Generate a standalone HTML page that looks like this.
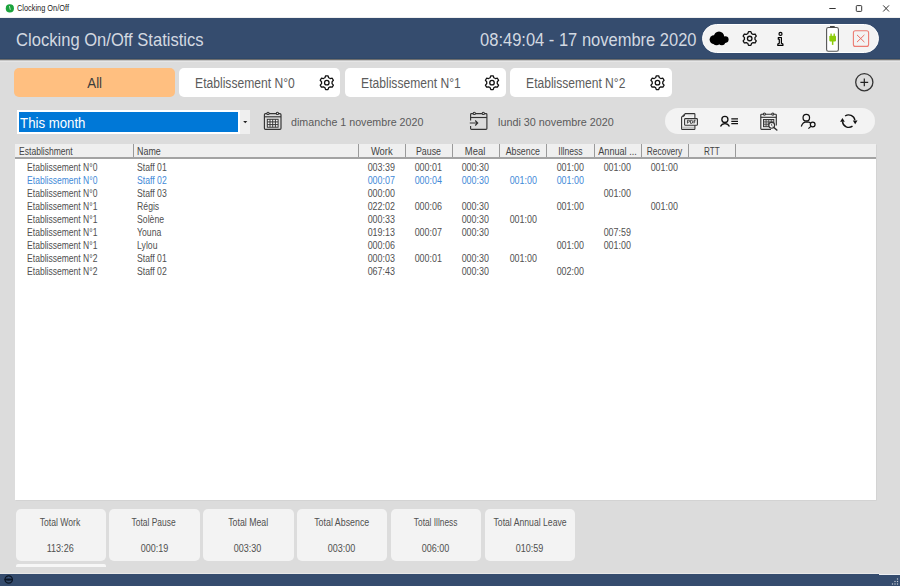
<!DOCTYPE html>
<html><head><meta charset="utf-8"><style>
html,body{margin:0;padding:0;width:900px;height:586px;overflow:hidden;background:#dcdcdc;}
body{position:relative;font-family:"Liberation Sans", sans-serif;}
.b{position:absolute;box-sizing:border-box;}
.t{position:absolute;white-space:nowrap;line-height:normal;font-family:"Liberation Sans", sans-serif;}
svg{position:absolute;left:0;top:0;}
</style></head><body>
<div class="b" style="left:0;top:0;width:900px;height:17px;background:#fff"></div>
<div class="b" style="left:0;top:17px;width:900px;height:1px;background:#f0f0f0"></div>
<div class="b" style="left:0;top:18px;width:900px;height:41px;background:#354c6e"></div>
<div class="b" style="left:0;top:58px;width:900px;height:1px;background:#2f4868"></div>
<div class="b" style="left:0;top:59px;width:900px;height:1px;background:#6e6e6e"></div>
<div class="b" style="left:0;top:60px;width:900px;height:1px;background:#c4c4c4"></div>
<div class="b" style="left:0;top:61px;width:900px;height:1px;background:#e6e6e6"></div>
<div class="b" style="left:702px;top:23.6px;width:176.5px;height:29.6px;border-radius:15px;background:#f3f3f3;border:1.6px solid #fff"></div>
<div class="b" style="left:14px;top:68px;width:161.3px;height:28.8px;border-radius:5px;background:#ffbf80"></div>
<div class="b" style="left:179px;top:68px;width:161.3px;height:28.8px;border-radius:5px;background:#fff"></div>
<div class="b" style="left:345px;top:68px;width:161.3px;height:28.8px;border-radius:5px;background:#fff"></div>
<div class="b" style="left:510.3px;top:68px;width:161.3px;height:28.8px;border-radius:5px;background:#fff"></div>
<div class="b" style="left:17px;top:110px;width:233px;height:24px;background:#fff"></div>
<div class="b" style="left:19px;top:112px;width:219px;height:20px;background:#0078d7"></div>
<div class="b" style="left:240px;top:110.3px;width:9.7px;height:23.5px;background:#efefef"></div>
<div class="b" style="left:664.7px;top:108px;width:210px;height:26px;border-radius:13px;background:#f3f3f3"></div>
<div class="b" style="left:15.3px;top:144px;width:860.5px;height:355.5px;background:#fff;box-shadow:0.8px 0.8px 0 #d2d2d2"></div>
<div class="b" style="left:15.3px;top:144px;width:860.5px;height:13px;background:#efefef"></div>
<div class="b" style="left:15.3px;top:157px;width:860.5px;height:1.8px;background:#a3a3a3"></div>
<div class="b" style="left:132.5px;top:144px;width:1.1px;height:13px;background:#9a9a9a"></div>
<div class="b" style="left:357.5px;top:144px;width:1.1px;height:13px;background:#9a9a9a"></div>
<div class="b" style="left:404.5px;top:144px;width:1.1px;height:13px;background:#9a9a9a"></div>
<div class="b" style="left:451.5px;top:144px;width:1.1px;height:13px;background:#9a9a9a"></div>
<div class="b" style="left:498.5px;top:144px;width:1.1px;height:13px;background:#9a9a9a"></div>
<div class="b" style="left:546.2px;top:144px;width:1.1px;height:13px;background:#9a9a9a"></div>
<div class="b" style="left:593.5px;top:144px;width:1.1px;height:13px;background:#9a9a9a"></div>
<div class="b" style="left:640.5px;top:144px;width:1.1px;height:13px;background:#9a9a9a"></div>
<div class="b" style="left:687.9px;top:144px;width:1.1px;height:13px;background:#9a9a9a"></div>
<div class="b" style="left:735.1px;top:144px;width:1.1px;height:13px;background:#9a9a9a"></div>

<div class="b" style="left:15.50px;top:509px;width:90.3px;height:52px;border-radius:5px;background:#f3f3f3"></div>
<div class="b" style="left:109.40px;top:509px;width:90.3px;height:52px;border-radius:5px;background:#f3f3f3"></div>
<div class="b" style="left:203.30px;top:509px;width:90.3px;height:52px;border-radius:5px;background:#f3f3f3"></div>
<div class="b" style="left:297.20px;top:509px;width:90.3px;height:52px;border-radius:5px;background:#f3f3f3"></div>
<div class="b" style="left:391.10px;top:509px;width:90.3px;height:52px;border-radius:5px;background:#f3f3f3"></div>
<div class="b" style="left:485.00px;top:509px;width:90.3px;height:52px;border-radius:5px;background:#f3f3f3"></div>

<div class="b" style="left:15.5px;top:564px;width:90.3px;height:3px;border-radius:2px 2px 0 0;background:#f7f7f7"></div>
<div class="b" style="left:0;top:574px;width:900px;height:12px;background:#354c6e"></div>
<div class="b" style="left:0;top:573px;width:879px;height:1px;background:#e8e8e8"></div>
<div class="b" style="left:879px;top:574px;width:21px;height:1px;background:#eef0f3"></div>
<svg width="900" height="586" viewBox="0 0 900 586">
<circle cx="9.85" cy="8.4" r="4.1" fill="#1ba33c"/><path d="M9.4,6 L10.3,9.8" stroke="#cfe9d3" stroke-width="0.9"/>
<path d="M829.3,8.5 H835.7" stroke="#333" stroke-width="1"/>
<rect x="856.3" y="5.6" width="5.4" height="5.8" rx="0.8" fill="none" stroke="#333" stroke-width="1"/>
<path d="M883.2,5.4 L889,11.5 M889,5.4 L883.2,11.5" stroke="#333" stroke-width="1"/>
<g fill="#000"><circle cx="719" cy="36.7" r="5.2"/><circle cx="713.9" cy="39.6" r="4.3"/><circle cx="716.5" cy="41.6" r="3.7"/><circle cx="721.8" cy="41.6" r="3.6"/><circle cx="725.3" cy="39.6" r="3.3"/></g>
<path d="M747.83,33.54 L748.52,31.60 L750.88,31.60 L751.57,33.54 A5.3,5.3 0 0 1 753.06,34.40 L755.08,34.02 L756.27,36.08 L754.93,37.64 A5.3,5.3 0 0 1 754.93,39.36 L756.27,40.92 L755.08,42.98 L753.06,42.60 A5.3,5.3 0 0 1 751.57,43.46 L750.88,45.40 L748.52,45.40 L747.83,43.46 A5.3,5.3 0 0 1 746.34,42.60 L744.32,42.98 L743.13,40.92 L744.47,39.36 A5.3,5.3 0 0 1 744.47,37.64 L743.13,36.08 L744.32,34.02 L746.34,34.40 A5.3,5.3 0 0 1 747.83,33.54 Z" fill="none" stroke="#111" stroke-width="1.3" stroke-linejoin="round"/><circle cx="749.7" cy="38.5" r="2.25" fill="none" stroke="#111" stroke-width="1.3"/>
<g fill="none" stroke="#000" stroke-width="1.2"><circle cx="780.5" cy="33.9" r="1.5"/><path d="M778.3,37.5 H781.4 V43.2 L782.9,44.1 V45.4 H777.8 V44.1 L779.3,43.2 V39.2 H778.3 Z" stroke-linejoin="round"/></g>
<rect x="826.6" y="27.5" width="11.8" height="23.7" rx="1.8" fill="#fff" stroke="#555" stroke-width="1.1"/><rect x="830" y="26" width="4.7" height="1.6" fill="#444"/>
<g fill="#8ccc0a"><rect x="829.3" y="35.8" width="6.7" height="5.6" rx="0.8"/><rect x="830.4" y="33.6" width="1.4" height="2.5"/><rect x="833.5" y="33.6" width="1.4" height="2.5"/><rect x="831.9" y="41" width="1.5" height="3.9"/></g>
<rect x="853.4" y="30.8" width="15.2" height="15.6" rx="2" fill="none" stroke="#ec7b72" stroke-width="1.1"/><path d="M857,34.9 L864.4,42.1 M864.4,34.9 L857,42.1" stroke="#ea6c62" stroke-width="1"/>
<path d="M324.93,77.74 L325.62,75.80 L327.98,75.80 L328.67,77.74 A5.3,5.3 0 0 1 330.16,78.60 L332.18,78.22 L333.37,80.28 L332.03,81.84 A5.3,5.3 0 0 1 332.03,83.56 L333.37,85.12 L332.18,87.18 L330.16,86.80 A5.3,5.3 0 0 1 328.67,87.66 L327.98,89.60 L325.62,89.60 L324.93,87.66 A5.3,5.3 0 0 1 323.44,86.80 L321.42,87.18 L320.23,85.12 L321.57,83.56 A5.3,5.3 0 0 1 321.57,81.84 L320.23,80.28 L321.42,78.22 L323.44,78.60 A5.3,5.3 0 0 1 324.93,77.74 Z" fill="none" stroke="#111" stroke-width="1.3" stroke-linejoin="round"/><circle cx="326.8" cy="82.7" r="2.25" fill="none" stroke="#111" stroke-width="1.3"/>
<path d="M490.13,77.74 L490.82,75.80 L493.18,75.80 L493.87,77.74 A5.3,5.3 0 0 1 495.36,78.60 L497.38,78.22 L498.57,80.28 L497.23,81.84 A5.3,5.3 0 0 1 497.23,83.56 L498.57,85.12 L497.38,87.18 L495.36,86.80 A5.3,5.3 0 0 1 493.87,87.66 L493.18,89.60 L490.82,89.60 L490.13,87.66 A5.3,5.3 0 0 1 488.64,86.80 L486.62,87.18 L485.43,85.12 L486.77,83.56 A5.3,5.3 0 0 1 486.77,81.84 L485.43,80.28 L486.62,78.22 L488.64,78.60 A5.3,5.3 0 0 1 490.13,77.74 Z" fill="none" stroke="#111" stroke-width="1.3" stroke-linejoin="round"/><circle cx="492.0" cy="82.7" r="2.25" fill="none" stroke="#111" stroke-width="1.3"/>
<path d="M655.63,77.74 L656.32,75.80 L658.68,75.80 L659.37,77.74 A5.3,5.3 0 0 1 660.86,78.60 L662.88,78.22 L664.07,80.28 L662.73,81.84 A5.3,5.3 0 0 1 662.73,83.56 L664.07,85.12 L662.88,87.18 L660.86,86.80 A5.3,5.3 0 0 1 659.37,87.66 L658.68,89.60 L656.32,89.60 L655.63,87.66 A5.3,5.3 0 0 1 654.14,86.80 L652.12,87.18 L650.93,85.12 L652.27,83.56 A5.3,5.3 0 0 1 652.27,81.84 L650.93,80.28 L652.12,78.22 L654.14,78.60 A5.3,5.3 0 0 1 655.63,77.74 Z" fill="none" stroke="#111" stroke-width="1.3" stroke-linejoin="round"/><circle cx="657.5" cy="82.7" r="2.25" fill="none" stroke="#111" stroke-width="1.3"/>
<circle cx="864.3" cy="82.2" r="8.6" fill="none" stroke="#333" stroke-width="1.3"/><path d="M860.4,82.4 H868.2 M864.3,78.5 V86.3" stroke="#222" stroke-width="1.2"/>
<path d="M243.2,121 H247.3 L245.25,123.2 Z" fill="#222"/>
<g fill="none" stroke="#333" stroke-width="1.15"><rect x="264.4" y="113.6" width="16.6" height="15.8" rx="1.1"/><path d="M264.4,116.8 H281"/></g><g fill="#ddd" stroke="#333" stroke-width="1.05"><circle cx="268" cy="113.4" r="1.15"/><circle cx="277.4" cy="113.4" r="1.15"/></g><g fill="none" stroke="#333" stroke-width="0.95"><rect x="267.3" y="119.3" width="10.8" height="7.9" fill="#f4f4f4"/><path d="M270,119.3 V127.2 M272.7,119.3 V127.2 M275.4,119.3 V127.2 M267.3,121.9 H278.1 M267.3,124.6 H278.1"/></g>
<g fill="none" stroke="#333" stroke-width="1.15"><path d="M470.6,120.4 V114.5 Q470.6,113.6 471.5,113.6 H486 Q486.9,113.6 486.9,114.5 V128.5 Q486.9,129.4 486,129.4 H471.5 Q470.6,129.4 470.6,128.5 V125.9"/><path d="M470.6,117.5 H486.9"/><path d="M469.8,123 H477.4 M475.2,120.5 L477.7,123 L475.2,125.5"/></g><g fill="#ddd" stroke="#333" stroke-width="1.05"><circle cx="474.3" cy="113.4" r="1.15"/><circle cx="483.3" cy="113.4" r="1.15"/></g>
<rect x="682.3" y="126.6" width="12" height="2.3" fill="#c4c4c4"/><g fill="none" stroke="#333" stroke-width="1.1"><path d="M685.2,113.6 H694.2 Q694.9,113.6 694.9,114.3 V128.8 Q694.9,129.5 694.2,129.5 H682.3 Q681.6,129.5 681.6,128.8 V117.2 Z" stroke-linejoin="round"/><path d="M682.6,116.6 Q684.6,116.8 684.9,114.6" stroke-width="0.9"/></g><path d="M688.2,115.9 H692.8" stroke="#d8d8d8" stroke-width="0.9"/><rect x="684.6" y="118.6" width="12.8" height="6.6" rx="0.8" fill="#f3f3f3" stroke="#333" stroke-width="1.1"/><g fill="none" stroke="#2a2a2a" stroke-width="0.85"><path d="M687.4,123.5 V120.3 H688.8 Q689.7,120.3 689.7,121.2 Q689.7,122.1 688.8,122.1 H687.4"/><path d="M690.6,123.4 V120.3 H691.4 Q692.8,120.3 692.8,121.85 Q692.8,123.4 691.4,123.4 Z"/><path d="M694,123.5 V120.3 H695.6 M694,121.9 H695.3"/></g>
<g fill="none" stroke="#111" stroke-width="1.3"><circle cx="724.9" cy="119.4" r="3.05"/><path d="M720.5,126.6 A4.8,4.8 0 0 1 729.4,126.6"/><path d="M731.3,118.9 H738 M731.3,121.3 H738 M731.3,123.6 H738" stroke-width="1.2"/></g>
<g fill="none" stroke="#333" stroke-width="1.15"><path d="M771,129.3 H761.5 Q760.8,129.3 760.8,128.6 V114.9 Q760.8,114.2 761.5,114.2 H775.6 Q776.3,114.2 776.3,114.9 V125.6"/><path d="M760.8,117.3 H776.3"/></g><g fill="#ddd" stroke="#333" stroke-width="1.05"><circle cx="764.4" cy="114.1" r="1.1"/><circle cx="772.8" cy="114.1" r="1.1"/></g><rect x="763.5" y="119.5" width="10.3" height="7.2" fill="#c9c9c9" stroke="#333" stroke-width="0.95"/><path d="M766.1,119.5 V126.7 M768.7,119.5 V126.7 M771.3,119.5 V126.7 M763.5,121.9 H773.8 M763.5,124.3 H773.8" stroke="#444" stroke-width="0.8"/><circle cx="771.7" cy="125.3" r="2.9" fill="#f3f3f3" stroke="#333" stroke-width="1.15"/><path d="M771.6,123.8 V125.5 L772.5,126.1" stroke="#444" stroke-width="0.8" fill="none"/><path d="M773.9,127.5 L776.8,130" stroke="#333" stroke-width="1.6" stroke-linecap="round"/>
<g fill="none" stroke="#111" stroke-width="1.25"><circle cx="806.3" cy="117.7" r="3.25"/><path d="M801.3,126.5 Q802.6,122 806.8,121.9 Q809,121.9 810.6,123"/><circle cx="812.7" cy="124.5" r="2.35"/><path d="M810.9,126.4 L808.4,128.6"/></g>
<g fill="none" stroke="#111" stroke-width="1.35"><path d="M845.1,116 A6.3,6.3 0 0 1 854.9,120.2"/><path d="M852.5,126.1 A6.3,6.3 0 0 1 842.5,121.6"/></g><path d="M852.8,120.6 L857.5,120.6 L855.15,124.3 Z" fill="#111"/><path d="M840.1,121.7 L844.8,121.7 L842.45,118 Z" fill="#111"/>
<g fill="none" stroke="#0b1626" stroke-width="1.3"><circle cx="8.7" cy="579.5" r="3.7"/></g><ellipse cx="8.7" cy="579.6" rx="4.3" ry="1.1" fill="#0b1626"/><circle cx="8.7" cy="577.4" r="0.7" fill="#3d5a80"/>
<rect x="896.9" y="578.4" width="1.2" height="1.2" fill="#c9ced6"/>
<rect x="894.4" y="580.9" width="1.2" height="1.2" fill="#c9ced6"/>
<rect x="896.9" y="580.9" width="1.2" height="1.2" fill="#c9ced6"/>
<rect x="891.9" y="583.4" width="1.2" height="1.2" fill="#c9ced6"/>
<rect x="894.4" y="583.4" width="1.2" height="1.2" fill="#c9ced6"/>
<rect x="896.9" y="583.4" width="1.2" height="1.2" fill="#c9ced6"/>
</svg>
<span class="t" style="left:17.31px;top:4.06px;font-size:8.2px;transform:scaleX(0.9002);transform-origin:0.49px 0;color:#222">Clocking On/Off</span>
<span class="t" style="left:16.14px;top:30.22px;font-size:17.7px;transform:scaleX(0.9365);transform-origin:1.06px 0;color:#d3d9e1">Clocking On/Off Statistics</span>
<span class="t" style="left:479.95px;top:30.30px;font-size:17.5px;transform:scaleX(0.9428);transform-origin:1.05px 0;color:#d3d9e1">08:49:04 - 17 novembre 2020</span>
<span class="t" style="left:86.83px;top:76.00px;font-size:13.8px;transform:scaleX(0.9644);transform-origin:50% 0;color:#3c3c3c">All</span>
<span class="t" style="left:194.97px;top:76.00px;font-size:13.8px;transform:scaleX(0.8768);transform-origin:0.83px 0;color:#5c5c5c">Etablissement N°0</span>
<span class="t" style="left:360.97px;top:76.00px;font-size:13.8px;transform:scaleX(0.8768);transform-origin:0.83px 0;color:#5c5c5c">Etablissement N°1</span>
<span class="t" style="left:525.67px;top:76.00px;font-size:13.8px;transform:scaleX(0.8732);transform-origin:0.83px 0;color:#5c5c5c">Etablissement N°2</span>
<span class="t" style="left:19.92px;top:114.97px;font-size:14.6px;transform:scaleX(0.9058);transform-origin:0.88px 0;color:#ffffff">This month</span>
<span class="t" style="left:291.49px;top:115.44px;font-size:11.8px;transform:scaleX(0.9045);transform-origin:0.71px 0;color:#5a5a5a">dimanche 1 novembre 2020</span>
<span class="t" style="left:497.59px;top:115.44px;font-size:11.8px;transform:scaleX(0.9147);transform-origin:0.71px 0;color:#5a5a5a">lundi 30 novembre 2020</span>
<span class="t" style="left:18.79px;top:146.02px;font-size:10.2px;transform:scaleX(0.8379);transform-origin:0.61px 0;color:#444">Establishment</span>
<span class="t" style="left:137.19px;top:146.02px;font-size:10.2px;transform:scaleX(0.8700);transform-origin:0.61px 0;color:#444">Name</span>
<span class="t" style="left:369.70px;top:146.02px;font-size:10.2px;transform:scaleX(0.9254);transform-origin:50% 0;color:#444">Work</span>
<span class="t" style="left:414.05px;top:146.02px;font-size:10.2px;transform:scaleX(0.8675);transform-origin:50% 0;color:#444">Pause</span>
<span class="t" style="left:464.45px;top:146.02px;font-size:10.2px;transform:scaleX(0.9248);transform-origin:50% 0;color:#444">Meal</span>
<span class="t" style="left:503.17px;top:146.02px;font-size:10.2px;transform:scaleX(0.8665);transform-origin:50% 0;color:#444">Absence</span>
<span class="t" style="left:556.05px;top:146.02px;font-size:10.2px;transform:scaleX(0.8422);transform-origin:50% 0;color:#444">Illness</span>
<span class="t" style="left:595.98px;top:146.02px;font-size:10.2px;transform:scaleX(0.8942);transform-origin:50% 0;color:#444">Annual ...</span>
<span class="t" style="left:642.98px;top:146.02px;font-size:10.2px;transform:scaleX(0.8228);transform-origin:50% 0;color:#444">Recovery</span>
<span class="t" style="left:701.99px;top:146.02px;font-size:10.2px;transform:scaleX(0.7989);transform-origin:50% 0;color:#444">RTT</span>
<span class="t" style="left:27.40px;top:162.00px;font-size:10px;transform:scaleX(0.8537);transform-origin:0.60px 0;color:#505050">Etablissement N°0</span>
<span class="t" style="left:137.20px;top:162.00px;font-size:10px;transform:scaleX(0.8650);transform-origin:0.60px 0;color:#505050">Staff 01</span>
<span class="t" style="left:366.20px;top:162.00px;font-size:10px;transform:scaleX(0.8913);transform-origin:50% 0;color:#505050">003:39</span>
<span class="t" style="left:413.20px;top:162.00px;font-size:10px;transform:scaleX(0.8913);transform-origin:50% 0;color:#505050">000:01</span>
<span class="t" style="left:460.20px;top:162.00px;font-size:10px;transform:scaleX(0.8913);transform-origin:50% 0;color:#505050">000:30</span>
<span class="t" style="left:555.20px;top:162.00px;font-size:10px;transform:scaleX(0.8913);transform-origin:50% 0;color:#505050">001:00</span>
<span class="t" style="left:602.20px;top:162.00px;font-size:10px;transform:scaleX(0.8913);transform-origin:50% 0;color:#505050">001:00</span>
<span class="t" style="left:649.20px;top:162.00px;font-size:10px;transform:scaleX(0.8913);transform-origin:50% 0;color:#505050">001:00</span>
<span class="t" style="left:27.40px;top:175.00px;font-size:10px;transform:scaleX(0.8537);transform-origin:0.60px 0;color:#3f8ad8">Etablissement N°0</span>
<span class="t" style="left:137.20px;top:175.00px;font-size:10px;transform:scaleX(0.8650);transform-origin:0.60px 0;color:#3f8ad8">Staff 02</span>
<span class="t" style="left:366.20px;top:175.00px;font-size:10px;transform:scaleX(0.8913);transform-origin:50% 0;color:#3f8ad8">000:07</span>
<span class="t" style="left:413.20px;top:175.00px;font-size:10px;transform:scaleX(0.8913);transform-origin:50% 0;color:#3f8ad8">000:04</span>
<span class="t" style="left:460.20px;top:175.00px;font-size:10px;transform:scaleX(0.8913);transform-origin:50% 0;color:#3f8ad8">000:30</span>
<span class="t" style="left:507.70px;top:175.00px;font-size:10px;transform:scaleX(0.8913);transform-origin:50% 0;color:#3f8ad8">001:00</span>
<span class="t" style="left:555.20px;top:175.00px;font-size:10px;transform:scaleX(0.8913);transform-origin:50% 0;color:#3f8ad8">001:00</span>
<span class="t" style="left:27.40px;top:188.00px;font-size:10px;transform:scaleX(0.8537);transform-origin:0.60px 0;color:#505050">Etablissement N°0</span>
<span class="t" style="left:137.20px;top:188.00px;font-size:10px;transform:scaleX(0.8650);transform-origin:0.60px 0;color:#505050">Staff 03</span>
<span class="t" style="left:366.20px;top:188.00px;font-size:10px;transform:scaleX(0.8913);transform-origin:50% 0;color:#505050">000:00</span>
<span class="t" style="left:602.20px;top:188.00px;font-size:10px;transform:scaleX(0.8913);transform-origin:50% 0;color:#505050">001:00</span>
<span class="t" style="left:27.40px;top:201.00px;font-size:10px;transform:scaleX(0.8537);transform-origin:0.60px 0;color:#505050">Etablissement N°1</span>
<span class="t" style="left:137.20px;top:201.00px;font-size:10px;transform:scaleX(0.8650);transform-origin:0.60px 0;color:#505050">Régis</span>
<span class="t" style="left:366.20px;top:201.00px;font-size:10px;transform:scaleX(0.8913);transform-origin:50% 0;color:#505050">022:02</span>
<span class="t" style="left:413.20px;top:201.00px;font-size:10px;transform:scaleX(0.8913);transform-origin:50% 0;color:#505050">000:06</span>
<span class="t" style="left:460.20px;top:201.00px;font-size:10px;transform:scaleX(0.8913);transform-origin:50% 0;color:#505050">000:30</span>
<span class="t" style="left:555.20px;top:201.00px;font-size:10px;transform:scaleX(0.8913);transform-origin:50% 0;color:#505050">001:00</span>
<span class="t" style="left:649.20px;top:201.00px;font-size:10px;transform:scaleX(0.8913);transform-origin:50% 0;color:#505050">001:00</span>
<span class="t" style="left:27.40px;top:214.00px;font-size:10px;transform:scaleX(0.8537);transform-origin:0.60px 0;color:#505050">Etablissement N°1</span>
<span class="t" style="left:137.20px;top:214.00px;font-size:10px;transform:scaleX(0.8650);transform-origin:0.60px 0;color:#505050">Solène</span>
<span class="t" style="left:366.20px;top:214.00px;font-size:10px;transform:scaleX(0.8913);transform-origin:50% 0;color:#505050">000:33</span>
<span class="t" style="left:460.20px;top:214.00px;font-size:10px;transform:scaleX(0.8913);transform-origin:50% 0;color:#505050">000:30</span>
<span class="t" style="left:507.70px;top:214.00px;font-size:10px;transform:scaleX(0.8913);transform-origin:50% 0;color:#505050">001:00</span>
<span class="t" style="left:27.40px;top:227.00px;font-size:10px;transform:scaleX(0.8537);transform-origin:0.60px 0;color:#505050">Etablissement N°1</span>
<span class="t" style="left:137.20px;top:227.00px;font-size:10px;transform:scaleX(0.8650);transform-origin:0.60px 0;color:#505050">Youna</span>
<span class="t" style="left:366.20px;top:227.00px;font-size:10px;transform:scaleX(0.8913);transform-origin:50% 0;color:#505050">019:13</span>
<span class="t" style="left:413.20px;top:227.00px;font-size:10px;transform:scaleX(0.8913);transform-origin:50% 0;color:#505050">000:07</span>
<span class="t" style="left:460.20px;top:227.00px;font-size:10px;transform:scaleX(0.8913);transform-origin:50% 0;color:#505050">000:30</span>
<span class="t" style="left:602.20px;top:227.00px;font-size:10px;transform:scaleX(0.8913);transform-origin:50% 0;color:#505050">007:59</span>
<span class="t" style="left:27.40px;top:240.00px;font-size:10px;transform:scaleX(0.8537);transform-origin:0.60px 0;color:#505050">Etablissement N°1</span>
<span class="t" style="left:137.20px;top:240.00px;font-size:10px;transform:scaleX(0.8650);transform-origin:0.60px 0;color:#505050">Lylou</span>
<span class="t" style="left:366.20px;top:240.00px;font-size:10px;transform:scaleX(0.8913);transform-origin:50% 0;color:#505050">000:06</span>
<span class="t" style="left:555.20px;top:240.00px;font-size:10px;transform:scaleX(0.8913);transform-origin:50% 0;color:#505050">001:00</span>
<span class="t" style="left:602.20px;top:240.00px;font-size:10px;transform:scaleX(0.8913);transform-origin:50% 0;color:#505050">001:00</span>
<span class="t" style="left:27.40px;top:253.00px;font-size:10px;transform:scaleX(0.8537);transform-origin:0.60px 0;color:#505050">Etablissement N°2</span>
<span class="t" style="left:137.20px;top:253.00px;font-size:10px;transform:scaleX(0.8650);transform-origin:0.60px 0;color:#505050">Staff 01</span>
<span class="t" style="left:366.20px;top:253.00px;font-size:10px;transform:scaleX(0.8913);transform-origin:50% 0;color:#505050">000:03</span>
<span class="t" style="left:413.20px;top:253.00px;font-size:10px;transform:scaleX(0.8913);transform-origin:50% 0;color:#505050">000:01</span>
<span class="t" style="left:460.20px;top:253.00px;font-size:10px;transform:scaleX(0.8913);transform-origin:50% 0;color:#505050">000:30</span>
<span class="t" style="left:507.70px;top:253.00px;font-size:10px;transform:scaleX(0.8913);transform-origin:50% 0;color:#505050">001:00</span>
<span class="t" style="left:27.40px;top:266.00px;font-size:10px;transform:scaleX(0.8537);transform-origin:0.60px 0;color:#505050">Etablissement N°2</span>
<span class="t" style="left:137.20px;top:266.00px;font-size:10px;transform:scaleX(0.8650);transform-origin:0.60px 0;color:#505050">Staff 02</span>
<span class="t" style="left:366.20px;top:266.00px;font-size:10px;transform:scaleX(0.8913);transform-origin:50% 0;color:#505050">067:43</span>
<span class="t" style="left:460.20px;top:266.00px;font-size:10px;transform:scaleX(0.8913);transform-origin:50% 0;color:#505050">000:30</span>
<span class="t" style="left:555.20px;top:266.00px;font-size:10px;transform:scaleX(0.8913);transform-origin:50% 0;color:#505050">002:00</span>
<span class="t" style="left:36.08px;top:517.02px;font-size:10.2px;transform:scaleX(0.8477);transform-origin:50% 0;color:#505050">Total Work</span>
<span class="t" style="left:45.05px;top:543.22px;font-size:10.2px;transform:scaleX(0.8850);transform-origin:50% 0;color:#505050">113:26</span>
<span class="t" style="left:127.33px;top:517.02px;font-size:10.2px;transform:scaleX(0.8268);transform-origin:50% 0;color:#505050">Total Pause</span>
<span class="t" style="left:138.56px;top:543.22px;font-size:10.2px;transform:scaleX(0.8850);transform-origin:50% 0;color:#505050">000:19</span>
<span class="t" style="left:224.63px;top:517.02px;font-size:10.2px;transform:scaleX(0.8604);transform-origin:50% 0;color:#505050">Total Meal</span>
<span class="t" style="left:232.46px;top:543.22px;font-size:10.2px;transform:scaleX(0.8850);transform-origin:50% 0;color:#505050">003:30</span>
<span class="t" style="left:310.03px;top:517.02px;font-size:10.2px;transform:scaleX(0.8680);transform-origin:50% 0;color:#505050">Total Absence</span>
<span class="t" style="left:326.36px;top:543.22px;font-size:10.2px;transform:scaleX(0.8850);transform-origin:50% 0;color:#505050">003:00</span>
<span class="t" style="left:409.03px;top:517.02px;font-size:10.2px;transform:scaleX(0.8191);transform-origin:50% 0;color:#505050">Total Illness</span>
<span class="t" style="left:420.26px;top:543.22px;font-size:10.2px;transform:scaleX(0.8850);transform-origin:50% 0;color:#505050">006:00</span>
<span class="t" style="left:486.50px;top:517.02px;font-size:10.2px;transform:scaleX(0.8482);transform-origin:50% 0;color:#505050">Total Annual Leave</span>
<span class="t" style="left:514.16px;top:543.22px;font-size:10.2px;transform:scaleX(0.8850);transform-origin:50% 0;color:#505050">010:59</span>
</body></html>
